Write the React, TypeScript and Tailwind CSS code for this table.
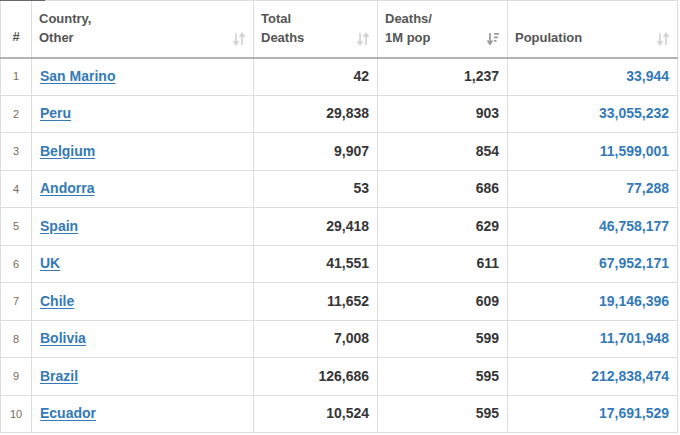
import React from "react";

type Row = { n: number; country: string; deaths: string; perM: string; pop: string };

const rows: Row[] = [
  { n: 1, country: "San Marino", deaths: "42", perM: "1,237", pop: "33,944" },
  { n: 2, country: "Peru", deaths: "29,838", perM: "903", pop: "33,055,232" },
  { n: 3, country: "Belgium", deaths: "9,907", perM: "854", pop: "11,599,001" },
  { n: 4, country: "Andorra", deaths: "53", perM: "686", pop: "77,288" },
  { n: 5, country: "Spain", deaths: "29,418", perM: "629", pop: "46,758,177" },
  { n: 6, country: "UK", deaths: "41,551", perM: "611", pop: "67,952,171" },
  { n: 7, country: "Chile", deaths: "11,652", perM: "609", pop: "19,146,396" },
  { n: 8, country: "Bolivia", deaths: "7,008", perM: "599", pop: "11,701,948" },
  { n: 9, country: "Brazil", deaths: "126,686", perM: "595", pop: "212,838,474" },
  { n: 10, country: "Ecuador", deaths: "10,524", perM: "595", pop: "17,691,529" },
];

function SortIcon({ active = false }: { active?: boolean }) {
  if (active) {
    return (
      <svg width="12" height="14" viewBox="0 0 12 14" className="shrink-0">
        <path d="M3 1v10M0.5 8.5L3 12l2.5-3.5" stroke="#999" strokeWidth="1.7" fill="none" />
        <rect x="7" y="1" width="5" height="1.7" fill="#999" />
        <rect x="7" y="4.5" width="4" height="1.7" fill="#999" />
        <rect x="7" y="8" width="2.5" height="1.7" fill="#999" />
      </svg>
    );
  }
  return (
    <svg width="12" height="14" viewBox="0 0 12 14" className="shrink-0">
      <path d="M3 1v11M0.5 9L3 12.5 5.5 9" stroke="#d4d4d4" strokeWidth="1.7" fill="none" />
      <path d="M9 13V2M6.5 5L9 1.5 11.5 5" stroke="#d4d4d4" strokeWidth="1.7" fill="none" />
    </svg>
  );
}

function Head({ lines, active }: { lines: string[]; active?: boolean }) {
  return (
    <th className="border border-[#ddd] border-b-2 border-b-[#b3b3b3] px-[7px] pb-[10px] align-bottom text-left font-bold">
      <div className="flex items-end justify-between">
        <div className="leading-[19px]">
          {lines.map((l) => (
            <div key={l}>{l}</div>
          ))}
        </div>
        <div className="mb-[1px] mr-[1px]">
          <SortIcon active={active} />
        </div>
      </div>
    </th>
  );
}

export default function App() {
  return (
    <div className="relative h-[435px] w-[680px] overflow-hidden bg-white font-['Liberation_Sans',Arial,sans-serif]">
      <div className="absolute left-0 top-0 z-10 h-px w-[45px] bg-[#666]" />
      <table className="w-[677px] table-fixed border-collapse text-[13px] text-[#555]">
        <colgroup>
          <col className="w-[31px]" />
          <col className="w-[222px]" />
          <col className="w-[124px]" />
          <col className="w-[130px]" />
          <col className="w-[170px]" />
        </colgroup>
        <thead>
          <tr className="h-[57px]">
            <th className="border border-[#ddd] border-b-2 border-b-[#b3b3b3] pb-[10px] align-bottom text-center font-bold">
              #
            </th>
            <Head lines={["Country,", "Other"]} />
            <Head lines={["Total", "Deaths"]} />
            <Head lines={["Deaths/", "1M pop"]} active />
            <Head lines={["Population"]} />
          </tr>
        </thead>
        <tbody className="text-[14px] font-bold text-[#363636]">
          {rows.map((r) => (
            <tr key={r.n} className="h-[37.5px]">
              <td className="border border-[#ddd] text-center text-[11px] font-normal text-[#7a6a55]">{r.n}</td>
              <td className="border border-[#ddd] px-[8px]">
                <a href="#" className="text-[#337ab7] underline underline-offset-2">
                  {r.country}
                </a>
              </td>
              <td className="border border-[#ddd] px-[8px] text-right">{r.deaths}</td>
              <td className="border border-[#ddd] px-[8px] text-right">{r.perM}</td>
              <td className="border border-[#ddd] px-[8px] text-right text-[#337ab7]">{r.pop}</td>
            </tr>
          ))}
        </tbody>
      </table>
    </div>
  );
}
